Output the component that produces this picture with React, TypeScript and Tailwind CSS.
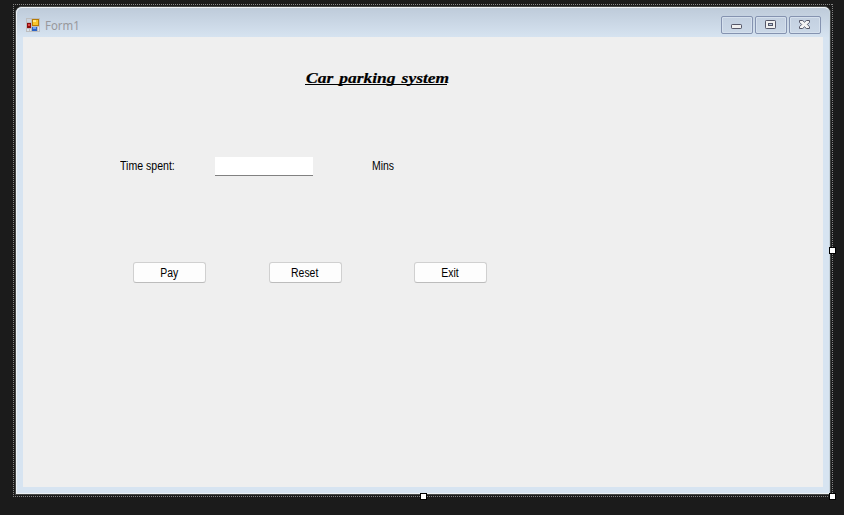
import React from "react";

function FormIcon() {
  return (
    <svg width="14" height="14" viewBox="0 0 14 14" shapeRendering="crispEdges">
      <rect width="14" height="14" fill="#bdbdbe" />
      <rect x="1" y="1" width="4" height="3" fill="#cbd3dd" />
      <rect x="1" y="11" width="2" height="2" fill="#dbe2ea" />
      <rect x="4" y="11" width="1" height="2" fill="#dbe2ea" />
      <rect x="12" y="9" width="1" height="4" fill="#dbe2ea" />
      <rect x="1" y="5" width="4" height="5" fill="#8c0d0d" />
      <rect x="2" y="6" width="2" height="2" fill="#df4848" />
      <rect x="6" y="1" width="7" height="7" fill="#b57b05" />
      <rect x="7" y="2" width="5" height="5" fill="#f8c62a" />
      <rect x="7" y="2" width="3" height="2" fill="#ffe680" />
      <rect x="6" y="9" width="5" height="4" fill="#2c62c4" />
      <rect x="7" y="9" width="3" height="2" fill="#6da2ef" />
    </svg>
  );
}

function CaptionButton({ label, children }: { label: string; children: React.ReactNode }) {
  return (
    <button
      aria-label={label}
      className="flex h-[18px] w-8 justify-center rounded-[2px] border border-[#8593b0] bg-linear-to-b from-[#c3d0e0] to-[#cbd8e7] pr-px shadow-[inset_0_0_0_1px_#d5e0ed]"
    >
      {children}
    </button>
  );
}

function PushButton({ text, className }: { text: string; className: string }) {
  return (
    <button
      className={`h-[21px] w-[73px] rounded-[3px] border border-[#d0d0d0] border-b-[#bcbcbc] bg-[#fdfdfd] pt-px pr-px text-[12px] leading-[18px] ${className}`}
    >
      <span className="inline-block scale-x-[0.87]">{text}</span>
    </button>
  );
}

function Handle({ className }: { className: string }) {
  return <div className={`absolute size-[7px] border border-black bg-white ${className}`} />;
}

export default function App() {
  return (
    <div className="relative h-[515px] w-[844px] overflow-hidden bg-[#1b1b1b] pt-[6px] pl-[15px] font-['Liberation_Sans',Arial,sans-serif] text-black">
      <div className="h-[489px] w-[816px] rounded-t-[7px] border border-[#454746] bg-[#d7e4f1]">
        <div className="h-[487px] rounded-t-[6px] border border-[#edf2f6] border-r-[#c6d3dd] border-b-[#eef2f5] bg-linear-to-b from-[#becbda] from-0% to-[#d7e4f1] to-[30px] px-[6px]">
          <header className="flex h-[29px] pl-[3px]">
            <div className="mt-[10px]">
              <FormIcon />
            </div>
            <span className="mt-[9px] ml-[5px] origin-left scale-x-[0.95] font-['Noto_Sans','Open_Sans',sans-serif] text-[12px] leading-[18px] text-[#98989c]">
              Form1
            </span>
            <div className="mt-[8px] mr-[2px] ml-auto flex gap-[2px]">
              <CaptionButton label="Minimize">
                <svg width="11" height="5" className="mt-[7px]">
                  <rect x=".5" y=".5" width="10" height="4" rx=".7" fill="#f0f0f0" stroke="#555768" />
                </svg>
              </CaptionButton>
              <CaptionButton label="Maximize">
                <svg width="11" height="9" className="mt-[3px]">
                  <rect x=".5" y=".5" width="10" height="8" rx=".7" fill="#f0f0f0" stroke="#555768" />
                  <rect x="3.5" y="3.5" width="4" height="2" fill="#b9cbe0" stroke="#555768" />
                </svg>
              </CaptionButton>
              <CaptionButton label="Close">
                <svg width="11" height="9" viewBox="0 0 11 9" className="mt-[3px]">
                  <path
                    d="M.5.5H3.7L5.5 2.2 7.3.5H10.5V2.3L8.3 4.5 10.5 6.7V8.5H7.3L5.5 6.8 3.7 8.5H.5V6.7L2.7 4.5.5 2.3Z"
                    fill="#f4f4f4"
                    stroke="#555768"
                    strokeLinejoin="round"
                  />
                </svg>
              </CaptionButton>
            </div>
          </header>

          <main className="h-[450px] w-[800px] bg-[#efefef]">
            <div className="flex h-[120px] pt-[32px] pl-[282px]">
              <h1 className="h-[16px] w-[142px] border-b border-black">
                <span className="block origin-left translate-x-px scale-x-[1.205] pt-px font-['Liberation_Serif',serif] text-[14.5px] leading-[17px] font-bold [word-spacing:1.4px] whitespace-nowrap italic [-webkit-text-stroke:0.2px_black]">
                  Car parking system
                </span>
              </h1>
            </div>
            <div className="flex h-[105px] text-[12px] leading-[18px]">
              <label className="ml-[97px] w-[95px]">
                <span className="inline-block origin-left scale-x-[0.88]">Time spent:</span>
              </label>
              <input className="h-[19px] w-[98px] border-b border-[#818181] bg-white outline-none" />
              <span className="ml-[59px] origin-left scale-x-[0.87]">Mins</span>
            </div>
            <div className="flex">
              <PushButton text="Pay" className="ml-[110px]" />
              <PushButton text="Reset" className="ml-[63px]" />
              <PushButton text="Exit" className="ml-[72px]" />
            </div>
          </main>
        </div>
      </div>

      <svg className="absolute top-0 left-0" width="844" height="515" shapeRendering="crispEdges">
        <path
          d="M13 4.5H833M13 496.5H833M13.5 4V497M832.5 4V497"
          fill="none"
          stroke="#858585"
          strokeDasharray="1 1"
        />
      </svg>
      <Handle className="top-[247px] left-[829px]" />
      <Handle className="top-[493px] left-[829px]" />
      <Handle className="top-[493px] left-[420px]" />
    </div>
  );
}
